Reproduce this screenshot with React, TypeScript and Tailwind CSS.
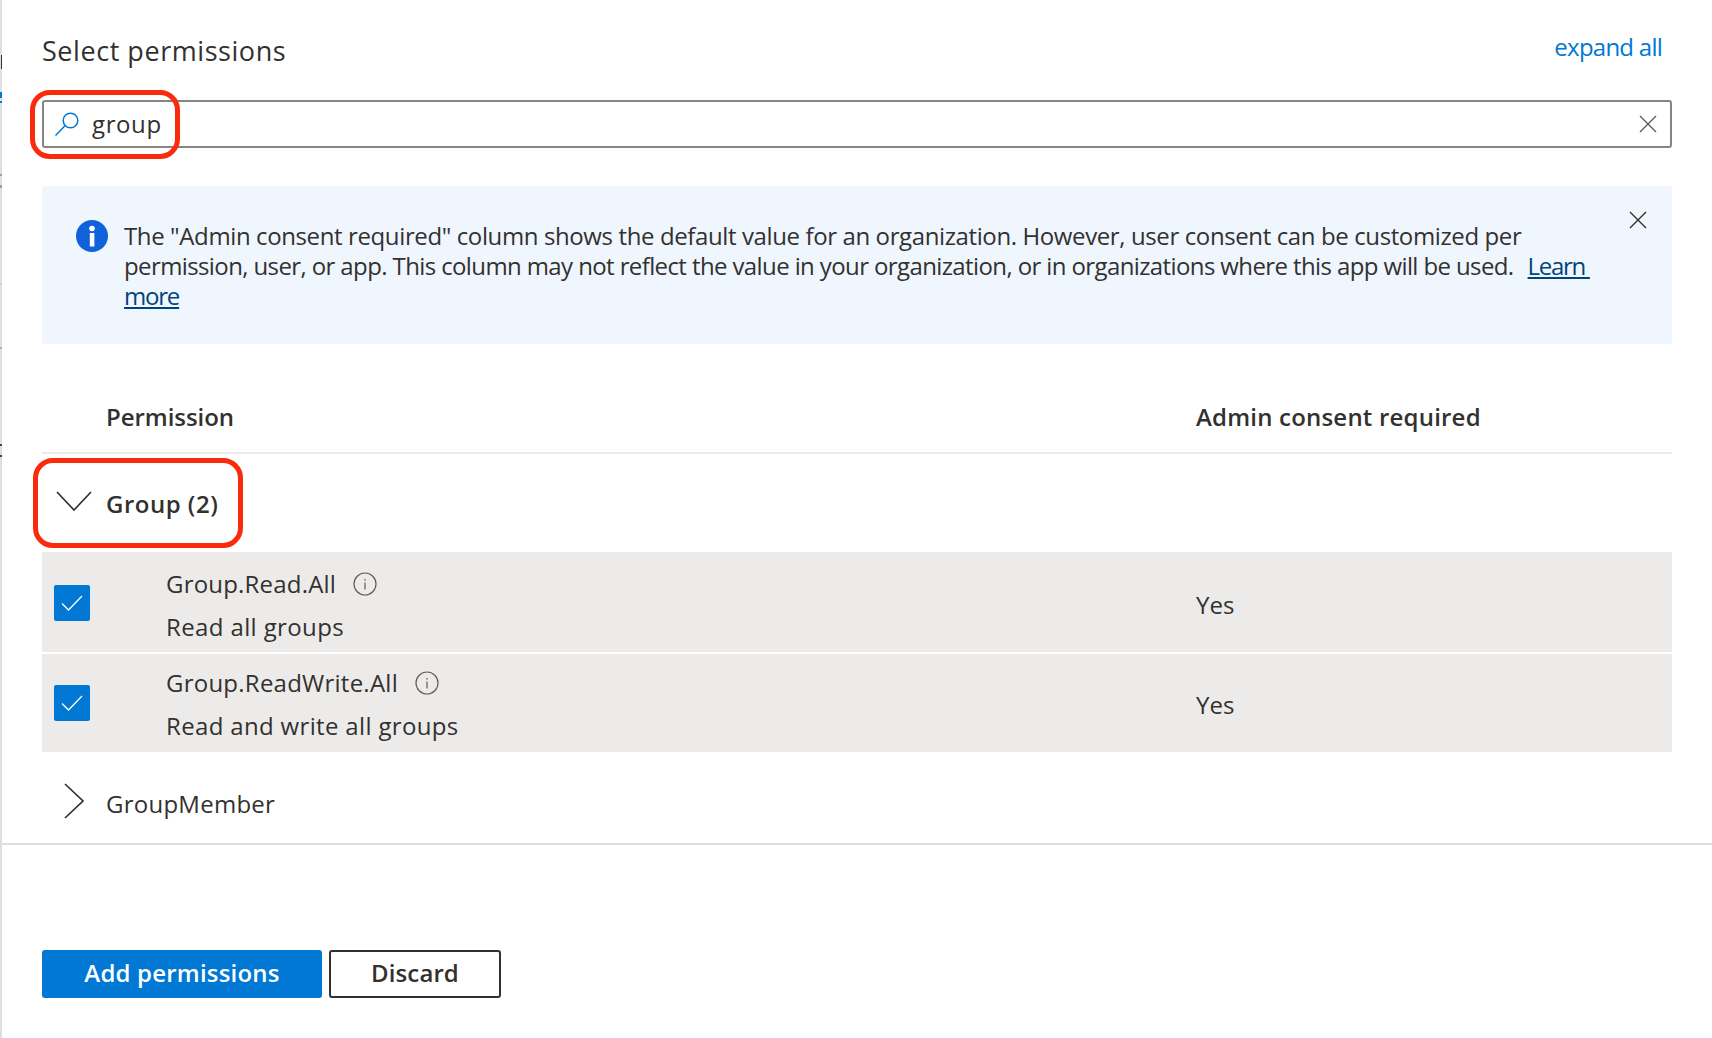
import React from "react";

const font = { fontFamily: '"Open Sans", "Noto Sans", sans-serif' };

function Info() {
  return (
    <svg width="24" height="24" viewBox="0 0 24 24" fill="none" className="ml-[17px]">
      <circle cx="12" cy="12" r="11" stroke="#605e5c" strokeWidth="1.2" />
      <rect x="11.4" y="10.5" width="1.2" height="7" fill="#605e5c" />
      <rect x="11.4" y="7" width="1.2" height="1.6" fill="#605e5c" />
    </svg>
  );
}

function Check({ offsetClass }: { offsetClass: string }) {
  return (
    <div className={`w-[36px] h-[36px] rounded-[2px] bg-[#0078d4] flex items-center justify-center shrink-0 ${offsetClass}`}>
      <svg width="24" height="18" viewBox="0 0 24 18" fill="none">
        <path d="M2 9.5 L8.5 16 L22 2" stroke="white" strokeWidth="1.3" />
      </svg>
    </div>
  );
}

function Row({
  name,
  desc,
  heightClass,
  offsetClass,
  nameClass,
  descClass,
}: {
  name: string;
  desc: string;
  heightClass: string;
  offsetClass: string;
  nameClass: string;
  descClass: string;
}) {
  return (
    <div className={`bg-[#edebe9] flex items-start pl-[12px] ${heightClass}`}>
      <Check offsetClass={offsetClass} />
      <div className="ml-[76px] w-[1030px] flex flex-col">
        <div className="flex items-center h-[40px]">
          <span className={nameClass}>{name}</span>
          <Info />
        </div>
        <div className={`h-[40px] mt-[3px] flex items-center ${descClass}`}>{desc}</div>
      </div>
      <div className={`h-[40px] flex items-center tracking-[0px] ${offsetClass}`}>Yes</div>
    </div>
  );
}

function EdgeMarks() {
  return (
    <>
      <span className="absolute left-[1px] top-[55px] w-[1px] h-[14px] bg-[#323130]" />
      <span className="absolute left-0 top-[92px] w-[2px] h-[6px] bg-[#0078d4]" />
      <span className="absolute left-0 top-[101px] w-[2px] h-[2px] bg-[#0078d4]" />
      <span className="absolute left-0 top-[174px] w-[2px] h-[2px] bg-[#a19f9d]" />
      <span className="absolute left-0 top-[185px] w-[2px] h-[3px] bg-[#a19f9d]" />
      <span className="absolute left-0 top-[283px] w-[2px] h-[2px] bg-[#d2d0ce]" />
      <span className="absolute left-0 top-[347px] w-[2px] h-[2px] bg-[#b3b0ad]" />
      <span className="absolute left-0 top-[444px] w-[2px] h-[2px] bg-[#484644]" />
      <span className="absolute left-0 top-[455px] w-[2px] h-[2px] bg-[#484644]" />
    </>
  );
}

export default function App() {
  return (
    <div
      className="relative w-[1712px] h-[1038px] bg-white overflow-hidden flex text-[#323130] text-[24px] tracking-[-0.25px]"
      style={font}
    >
      <div className="relative w-[2px] h-full bg-[#e1dfdd] shrink-0">
        <EdgeMarks />
      </div>
      <div className="flex-1 flex flex-col">
        <div className="h-[845px] border-b-2 border-[#e1dfdd] pl-[40px] pr-[40px] flex flex-col">
          <div className="flex justify-between h-[100px] pt-[30px] pr-[10px]">
            <h1 className="text-[27px] leading-[42px] tracking-[0.55px] text-[#323130]">Select permissions</h1>
            <a className="text-[#0078d4] leading-[34px] text-[24px] tracking-[-0.75px]">expand all</a>
          </div>

          <div className="h-[48px] border-2 border-[#858585] rounded-[3px] flex items-center pl-[10px] pr-[13px]">
            <svg width="26" height="26" viewBox="0 0 26 26" fill="none">
              <circle cx="16.5" cy="9.5" r="7.3" stroke="#0078d4" strokeWidth="1.5" />
              <path d="M11 14.8 L1.5 24.5" stroke="#0078d4" strokeWidth="1.5" />
            </svg>
            <span className="ml-[12px] flex-1 tracking-[0.6px]">group</span>
            <svg width="18" height="18" viewBox="0 0 18 18" fill="none">
              <path d="M1 1 L17 17 M17 1 L1 17" stroke="#605e5c" strokeWidth="1.4" />
            </svg>
          </div>

          <div className="relative mt-[38px] h-[158px] bg-[#f0f6fe] rounded-[3px] pl-[34px] flex">
            <svg width="32" height="32" viewBox="0 0 32 32" className="mt-[34px] shrink-0">
              <circle cx="16" cy="16" r="16" fill="#0f62d9" />
              <rect x="13.8" y="13" width="4.6" height="13.5" fill="white" />
              <circle cx="16" cy="8.5" r="2.8" fill="white" />
            </svg>
            <p className="ml-[16px] mt-[35px] leading-[30px] whitespace-nowrap">
              <span className="tracking-[-0.385px]">
                The "Admin consent required" column shows the default value for an organization. However, user consent can be customized per
              </span>
              <br />
              <span className="tracking-[-0.61px]">
                permission, user, or app. This column may not reflect the value in your organization, or in organizations where this app will be used.
              </span>
              <span className="ml-[14px] underline text-[#004578] tracking-[-1.3px] whitespace-pre">Learn </span>
              <br />
              <span className="underline text-[#004578] tracking-[-1.2px]">more</span>
            </p>
            <svg width="18" height="18" viewBox="0 0 18 18" fill="none" className="absolute right-[25px] top-[25px]">
              <path d="M1 1 L17 17 M17 1 L1 17" stroke="#323130" strokeWidth="1.4" />
            </svg>
          </div>

          <div className="mt-[36px] h-[74px] border-b-2 border-[#edebe9] flex items-center font-semibold pt-[2px]">
            <div className="ml-[64px] w-[1090px] tracking-[-0.05px]">Permission</div>
            <div className="tracking-[0.2px]">Admin consent required</div>
          </div>

          <div className="h-[98px] flex items-center pl-[14px] font-semibold">
            <svg width="36" height="20" viewBox="0 0 36 20" fill="none" className="mb-[4px]">
              <path d="M1 1 L18 19 L35 1" stroke="#323130" strokeWidth="1.7" />
            </svg>
            <span className="ml-[14px] pt-[2px] tracking-[0.5px]">Group (2)</span>
          </div>

          <Row
            name="Group.Read.All"
            desc="Read all groups"
            heightClass="h-[100px] pt-[12px]"
            offsetClass="mt-[21px]"
            nameClass="tracking-[0.2px]"
            descClass="tracking-[0.38px]"
          />
          <div className="h-[2px]" />
          <Row
            name="Group.ReadWrite.All"
            desc="Read and write all groups"
            heightClass="h-[98px] pt-[9px]"
            offsetClass="mt-[22px]"
            nameClass="tracking-[0.24px]"
            descClass="tracking-[0.34px]"
          />

          <div className="flex-1 flex items-center pl-[22px] pt-[13px]">
            <svg width="20" height="36" viewBox="0 0 20 36" fill="none" className="mb-[6px]">
              <path d="M1 1 L19 18 L1 35" stroke="#323130" strokeWidth="1.7" />
            </svg>
            <span className="ml-[22px] tracking-[0.25px]">GroupMember</span>
          </div>
        </div>

        <div className="pl-[40px] pt-[105px] flex gap-[7px] font-semibold">
          <button className="w-[280px] h-[48px] pb-[2px] bg-[#0078d4] text-white rounded-[3px] tracking-[0.2px]">Add permissions</button>
          <button className="w-[172px] h-[48px] pb-[2px] border-2 border-[#323130] rounded-[3px] text-[#323130] tracking-[0.1px]">Discard</button>
        </div>
      </div>

      <div className="absolute left-[30px] top-[90px] w-[150px] h-[69px] border-[5px] border-[#fa2b0c] rounded-[20px]" />
      <div className="absolute left-[33px] top-[458px] w-[210px] h-[90px] border-[5px] border-[#fa2b0c] rounded-[20px]" />
    </div>
  );
}
